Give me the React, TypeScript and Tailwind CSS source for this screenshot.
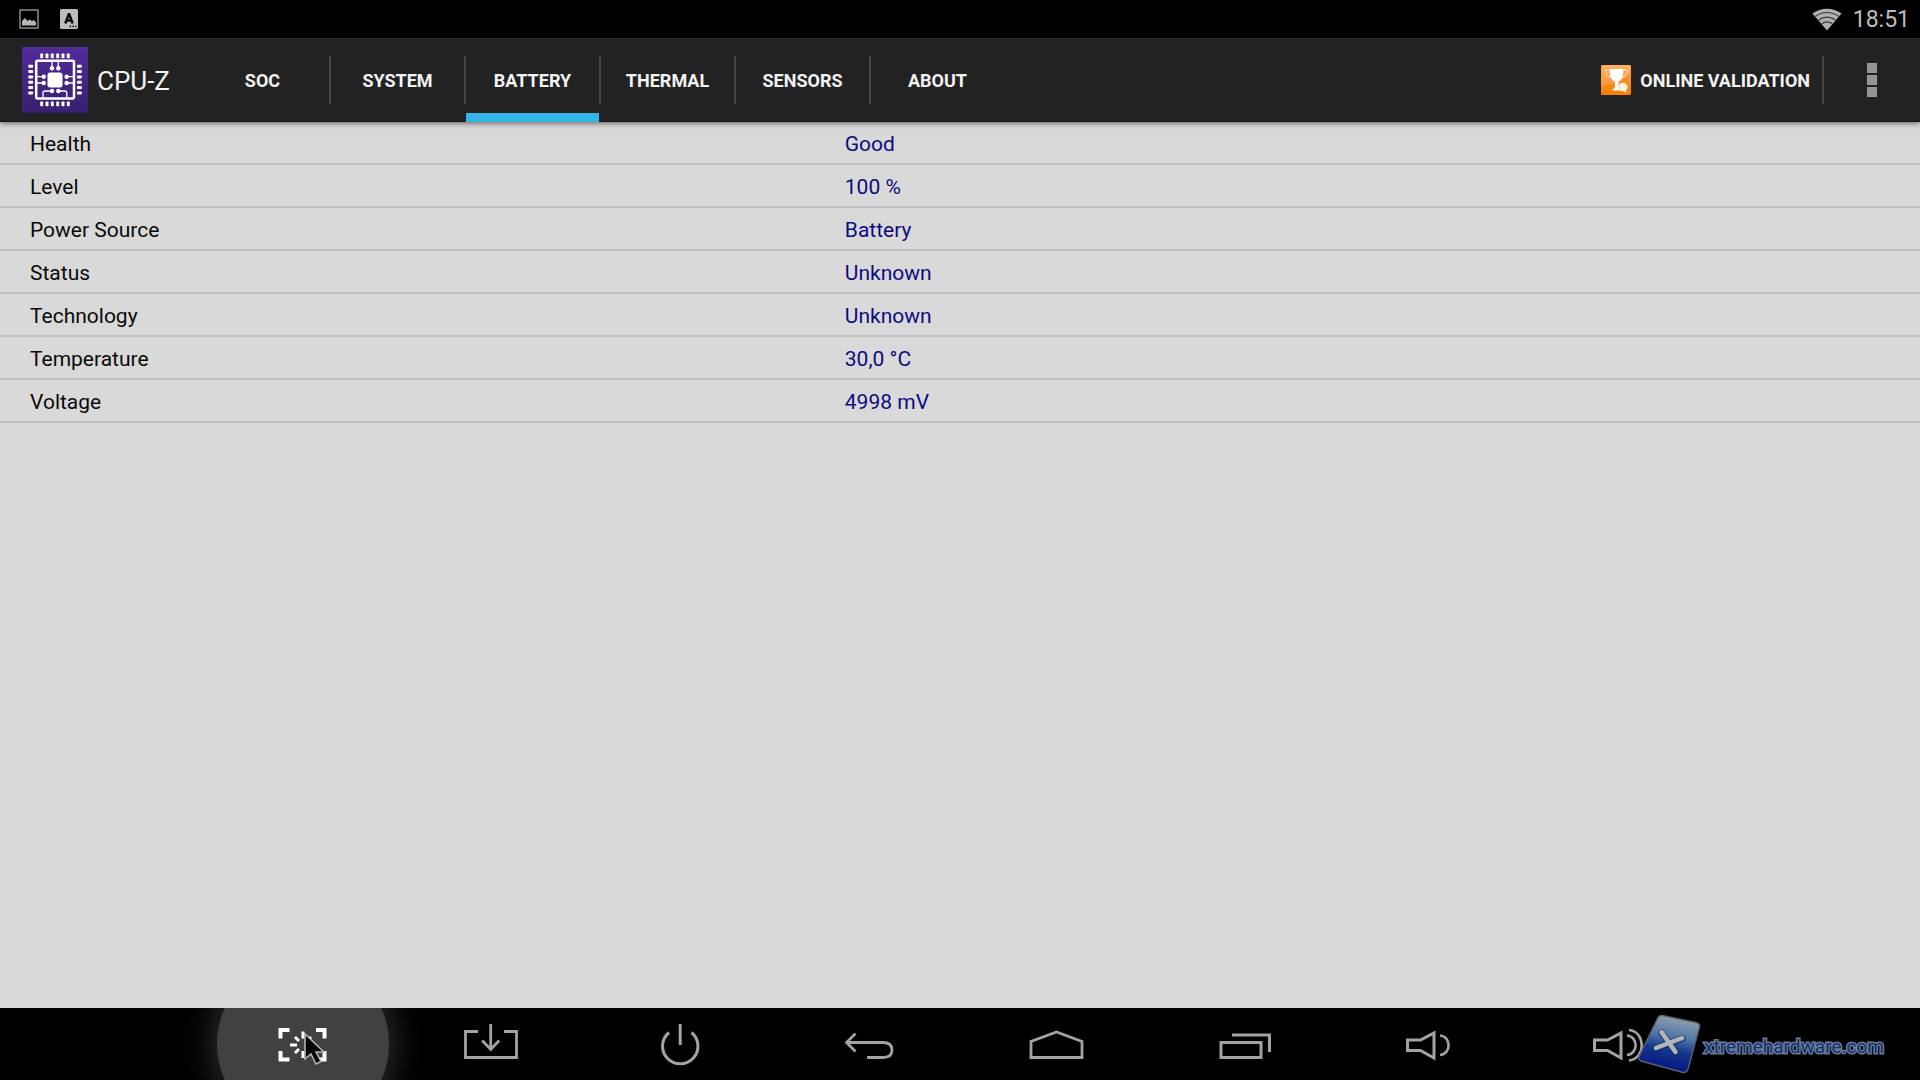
import type { ReactNode } from "react";
import { clsx } from "clsx";

const TABS = ["SOC", "SYSTEM", "BATTERY", "THERMAL", "SENSORS", "ABOUT"];
const ACTIVE_TAB = "BATTERY";

const BATTERY_ROWS: { label: string; value: string }[] = [
  { label: "Health", value: "Good" },
  { label: "Level", value: "100 %" },
  { label: "Power Source", value: "Battery" },
  { label: "Status", value: "Unknown" },
  { label: "Technology", value: "Unknown" },
  { label: "Temperature", value: "30,0 °C" },
  { label: "Voltage", value: "4998 mV" },
];

function PictureIcon() {
  return (
    <svg width="20" height="20" viewBox="0 0 20 20" aria-hidden="true">
      <rect x="1" y="1" width="18" height="18" fill="none" stroke="#8a8a8a" strokeWidth="1.5" />
      <path d="M3 16.500V12l3-3 2.500 3 2-1.500L13 12l2-1 2 2.500v3z" fill="#b4b4b4" />
    </svg>
  );
}

function KeyboardIcon() {
  return (
    <svg width="18" height="20" viewBox="0 0 18 20" aria-hidden="true">
      <rect width="18" height="20" rx="1.500" fill="#bdbdbd" />
      <path d="M9 4.500L5.300 14.500M9 4.500l3.700 10M6.500 11.500h5" fill="none" stroke="#0a0a0a" strokeWidth="2.400" />
      <path d="M9.500 16.500h1.700v1.700H9.500zM12.300 16.500H14v1.700h-1.700zM15.100 16.500h1.400v1.700h-1.400z" fill="#222" />
    </svg>
  );
}

function WifiIcon() {
  return (
    <svg width="30" height="23" viewBox="0 0 30 23" aria-hidden="true">
      <path d="M15 22.500L.5 5.500C9-.8 21-.8 29.500 5.500z" fill="#b0b0b0" />
      <g fill="none" stroke="#3a3a3a" strokeWidth="1.100">
        <path d="M3.500 8.200c7-5 16-5 23 0" />
        <path d="M6.600 12c5-3.800 11.800-3.800 16.800 0" />
        <path d="M9.800 15.800c3.200-2.400 7.200-2.400 10.400 0" />
      </g>
    </svg>
  );
}

const PINS = [20, 25.300, 30.600, 36, 41.300, 46.600];

function CpuIcon() {
  return (
    <svg width="66" height="66" viewBox="0 0 66 66" aria-hidden="true">
      <defs>
        <linearGradient id="cpu-bg" x1="0" y1="0" x2="0" y2="1">
          <stop offset="0" stopColor="#512b9b" />
          <stop offset="1" stopColor="#38206f" />
        </linearGradient>
      </defs>
      <rect width="66" height="66" fill="url(#cpu-bg)" />
      <g fill="#fff">
        {PINS.map((p) => (
          <g key={p}>
            <rect x={p - 1.800} y="6.500" width="3" height="4.800" rx=".8" />
            <rect x={p - 1.800} y="54.500" width="3" height="4.800" rx=".8" />
            <rect x="6.300" y={p - 2.200} width="4.800" height="3" rx=".8" />
            <rect x="55" y={p - 2.200} width="4.800" height="3" rx=".8" />
          </g>
        ))}
        <rect x="25.500" y="25.500" width="15" height="15" rx="2.500" />
        <circle cx="30" cy="21.300" r="2.200" />
        <circle cx="36.300" cy="21.300" r="2.200" />
        <circle cx="30" cy="44" r="2.200" />
        <circle cx="36.300" cy="44" r="2.200" />
        <circle cx="21.700" cy="29.700" r="2.200" />
        <circle cx="21.700" cy="36" r="2.200" />
        <circle cx="44.600" cy="29.700" r="2.200" />
        <circle cx="44.600" cy="36" r="2.200" />
      </g>
      <g fill="none" stroke="#fff">
        <rect x="14.200" y="13.800" width="37.800" height="37.800" rx="1.500" strokeWidth="2.500" />
        <path
          d="M30 21v-7M36.300 21v-7M21.700 29.700H14M21.700 36H14M44.600 29.700H52M44.600 36H52M30 44h-7q-2 0-2 2v6M36.300 44h6.500q2 0 2 2v6"
          strokeWidth="1.300"
        />
      </g>
    </svg>
  );
}

function TrophyIcon() {
  return (
    <svg width="30" height="30" viewBox="0 0 30 30" aria-hidden="true">
      <defs>
        <linearGradient id="trophy-bg" x1="0" y1="0" x2="0" y2="1">
          <stop offset="0" stopColor="#ffa64d" />
          <stop offset="1" stopColor="#f57d00" />
        </linearGradient>
      </defs>
      <rect width="30" height="30" rx="1.500" fill="url(#trophy-bg)" />
      <path d="M0 21C10 20 24 14 30 7v-7H0z" fill="#fff" opacity=".12" />
      <path d="M8.500 4h14c0 7-1.500 10.500-5 13v5l2.500 3.500h-9l3-3.500v-5c-4-2.500-5.500-6-5.500-13z" fill="#fff" />
      <path d="M8.500 5H4.500c0 4 2 6.500 5.500 7.500M22.500 5h4c0 4-2 6.500-5.500 7.500" fill="none" stroke="#ffe3c4" strokeWidth="1" />
      <path d="M18 20.500c0-3.500 8-4 8.500 1 .2 2-.8 3-1.500 3.500l.5 3-3.500-2c-3 0-4-2-4-5.500z" fill="#fff3e4" />
    </svg>
  );
}

// Navigation glyphs share one 72x48 canvas so they line up with each other.
function NavGlyph({ children }: { children: ReactNode }) {
  return (
    <svg
      width="72"
      height="48"
      viewBox="0 0 72 48"
      fill="none"
      stroke="#a3a3a3"
      strokeWidth="3"
      aria-hidden="true"
    >
      {children}
    </svg>
  );
}

const NAV_BUTTONS: { label: string; glyph: ReactNode }[] = [
  {
    label: "Screenshot",
    glyph: (
      <g stroke="#fff">
        <path d="M13.500 18.500V10h9M49 10h8.500v8.500M13.500 31v8.500h9M49 39.500h8.500V31" strokeWidth="4" />
        <path d="M23 25h7M28 17l4 4M28 33l4-4M36 11.500v7M36 31v7M44 17l-4 4M44 33l-4-4M42 25h7" strokeWidth="3" />
      </g>
    ),
  },
  {
    label: "Hide bar",
    glyph: (
      <>
        <path d="M22 11.500H9.500v26h51v-26H48" strokeWidth="2.800" />
        <path d="M34.700 4v25.500M26.200 20.500l8.500 9 8.500-9" strokeWidth="2.800" />
      </>
    ),
  },
  {
    label: "Power",
    glyph: <path d="M25 12.500A17.700 17.700 0 1 0 47.500 12.500M36.200 4v21" />,
  },
  {
    label: "Back",
    glyph: <path d="M22.500 13.500l-9 9 9 9M13.500 22.500H50q9 0 9 7.500t-9 7.500H34" strokeWidth="2.800" />,
  },
  {
    label: "Home",
    glyph: <path d="M10 37.500V21.500l25.500-9.500L61 21.500v16z" strokeWidth="2.800" />,
  },
  {
    label: "Recent apps",
    glyph: (
      <>
        <rect x="11" y="22.500" width="40" height="15" />
        <path d="M22 15h37.500v17" />
      </>
    ),
  },
  {
    label: "Volume down",
    glyph: (
      <>
        <path d="M9.500 20h13L36 13v25l-13.500-7.500h-13z" />
        <path d="M42 15.500c11.500 1 11.500 18.500 0 19.500" strokeWidth="2.600" />
      </>
    ),
  },
  {
    label: "Volume up",
    glyph: (
      <>
        <path d="M7.500 20h13L34 13v25l-13.500-7.500h-13z" />
        <path d="M40 15.500c11.500 1 11.500 18.500 0 19.500M42 10c17 1.500 17 29 0 30.500" strokeWidth="2.600" />
      </>
    ),
  },
];

function StatusBar() {
  return (
    <div className="flex h-[38px] items-center justify-between bg-black pr-[10px] pl-[19px]">
      <div className="flex items-center gap-[21px]">
        <PictureIcon />
        <KeyboardIcon />
      </div>
      <div className="flex items-center gap-[11px]">
        <WifiIcon />
        <time className="pt-[2px] text-[23px] leading-9 text-[#bebebe]">18:51</time>
      </div>
    </div>
  );
}

function ActionBar() {
  return (
    <header className="relative z-10 flex h-[84px] items-center border-t border-b border-t-[#2c2c2c] border-b-[#161616] bg-[#222] pl-[22px] shadow-[0_1px_6px_rgba(0,0,0,0.6)]">
      <div className="flex w-[174px] items-center gap-[9px]">
        <CpuIcon />
        <h1 className="pt-[2px] text-[26px] leading-8 text-[#f3f3f3]">CPU-Z</h1>
      </div>
      <nav className="flex">
        {TABS.map((tab, i) => (
          <div key={tab} className="flex items-center">
            <button
              aria-current={tab === ACTIVE_TAB ? "page" : undefined}
              className={clsx(
                "h-[84px] w-[133px] border-y-9 border-t-transparent pt-[2px] text-lg font-bold text-[#f3f3f3]",
                tab === ACTIVE_TAB ? "border-b-[#33b5e5]" : "border-b-transparent"
              )}
            >
              {tab}
            </button>
            {i < TABS.length - 1 && <span className="h-12 w-[2px] bg-[#464646]" />}
          </div>
        ))}
      </nav>
      <div className="ml-auto flex items-center">
        <button className="flex h-[82px] items-center gap-[9px] pr-3 text-lg font-bold text-[#f3f3f3]">
          <TrophyIcon />
          <span className="pt-[2px]">ONLINE VALIDATION</span>
        </button>
        <span className="h-12 w-[2px] bg-[#464646]" />
        <button aria-label="More options" className="flex h-[82px] w-24 flex-col items-center justify-center gap-[2px]">
          <span className="size-[10px] bg-[#959595]" />
          <span className="size-[10px] bg-[#959595]" />
          <span className="size-[10px] bg-[#959595]" />
        </button>
      </div>
    </header>
  );
}

function Watermark() {
  return (
    <div className="pointer-events-none absolute right-9 bottom-1 flex items-center gap-[3px]">
      <svg width="64" height="62" viewBox="0 0 64 62" aria-hidden="true">
        <defs>
          <linearGradient id="tile" x1=".3" y1="0" x2=".1" y2="1">
            <stop offset="0" stopColor="#8b9cab" />
            <stop offset=".3" stopColor="#5277a8" />
            <stop offset=".55" stopColor="#12378a" />
            <stop offset="1" stopColor="#020a86" />
          </linearGradient>
        </defs>
        <path
          d="M21 3.500q1.500-2.500 4.500-2L59 8.500q4 1 3.500 4.500L51 55q-1.500 4-5 3.500L4 47q-3-1-2-4.500z"
          fill="url(#tile)"
          stroke="#59606c"
          strokeWidth="1.400"
        />
        <path d="M24.500 18.500l14.500 20M45.500 24.500L19 34.500" stroke="#16294f" strokeWidth="7" strokeLinecap="round" opacity=".5" />
        <path d="M24.500 18l14 20M45 24L19 34" stroke="#b2b6bc" strokeWidth="4.500" strokeLinecap="round" />
      </svg>
      <span className="pt-1 text-[19px] leading-6 text-[#16306c] [-webkit-text-stroke:3px_#687b9c] [paint-order:stroke_fill]">
        xtremehardware.com
      </span>
    </div>
  );
}

function NavigationBar() {
  return (
    <footer className="relative flex h-[72px] overflow-hidden bg-black pr-[203px] pl-[209px]">
      {NAV_BUTTONS.map(({ label, glyph }, i) => (
        <button key={label} aria-label={label} className="relative flex flex-1 items-center justify-center">
          {i === 0 && (
            <span className="absolute size-[172px] rounded-full bg-[#414141] shadow-[0_0_28px_8px_rgba(65,65,65,0.6)]" />
          )}
          <span className="relative">
            <NavGlyph>{glyph}</NavGlyph>
            {i === 0 && (
              <svg className="absolute top-3 left-9" width="26" height="36" viewBox="0 0 26 36" aria-hidden="true">
                <path
                  d="M2 2v25l6-5 5 10 5-2.500-5-9.500h8z"
                  fill="#050505"
                  stroke="#b9b9b9"
                  strokeWidth="1.500"
                />
              </svg>
            )}
          </span>
        </button>
      ))}
      <Watermark />
    </footer>
  );
}

export default function App() {
  return (
    <div className="flex min-h-screen flex-col bg-[#d9d9d9] font-[Roboto,sans-serif]">
      <StatusBar />
      <ActionBar />
      <main className="flex-1">
        <table className="w-full table-fixed text-left text-[21px] leading-[38px]">
          <tbody>
            {BATTERY_ROWS.map((row) => (
              <tr key={row.label} className="border-b-2 border-[#c1c1c1]">
                <th scope="row" className="w-[44%] pt-[3px] pl-[30px] font-normal text-[#0a0a0a]">
                  {row.label}
                </th>
                <td className="pt-[3px] text-[#0c0c80]">{row.value}</td>
              </tr>
            ))}
          </tbody>
        </table>
      </main>
      <NavigationBar />
    </div>
  );
}
